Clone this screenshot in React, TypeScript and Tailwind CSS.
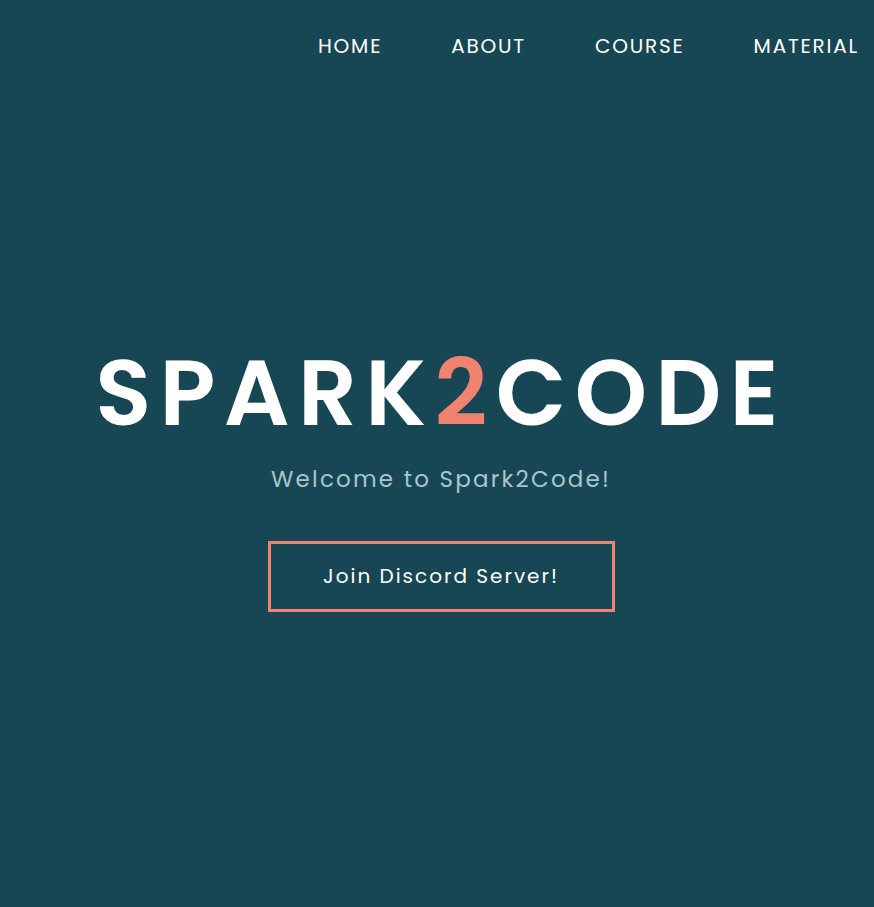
import React from "react";

export default function App() {
  const font = { fontFamily: "Poppins, 'Inter', 'Noto Sans', sans-serif" };
  return (
    <div className="min-h-[907px] w-full bg-[#174755] text-white" style={font}>
      <nav className="flex justify-end items-center h-[92px] pr-[15px]">
        <ul className="flex gap-[69px] text-[20px] tracking-[1.8px] font-normal">
          <li>HOME</li>
          <li>ABOUT</li>
          <li>COURSE</li>
          <li>MATERIAL</li>
        </ul>
      </nav>
      <main className="flex flex-col items-center pt-[255px]">
        <h1 className="text-[92px] font-semibold leading-none tracking-[8.3px] pl-[8px]">
          SPARK<span className="text-[#f0826f]">2</span>CODE
        </h1>
        <p className="mt-[23px] ml-[8px] text-[23px] tracking-[2.2px] text-[#a8c5cb]">Welcome to Spark2Code!</p>
        <button className="mt-[44px] ml-[8px] w-[347px] h-[71px] border-[3px] border-[#f0826f] text-[20px] tracking-[2px] text-white">
          Join Discord Server!
        </button>
      </main>
    </div>
  );
}
